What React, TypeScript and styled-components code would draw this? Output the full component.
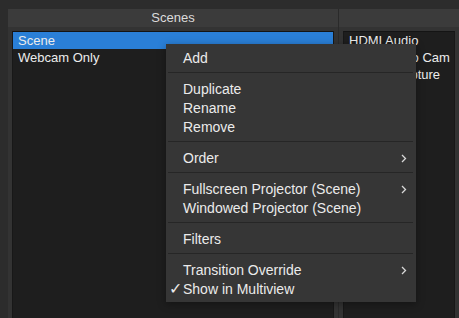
import React from "react";
import styled, { createGlobalStyle } from "styled-components";

const Global = createGlobalStyle`
  html, body { margin: 0; padding: 0; background: #2c2c2c; overflow: hidden; }
  body { font-family: "Liberation Sans", Arial, sans-serif; }
`;

const Page = styled.div`
  position: relative;
  height: 318px;
  width: 459px;
  padding: 9px 0 0 8px;
  box-sizing: border-box;
  display: flex;
  background: #2c2c2c;
`;

const Dock = styled.section<{ $w?: number }>`
  display: flex;
  flex-direction: column;
  ${(p) => (p.$w ? `width: ${p.$w}px; flex: none;` : `flex: 1;`)}
  background: #333333;
  min-width: 0;
`;

const DockHeader = styled.div`
  height: 18px;
  background: #3b3b3b;
  color: #dcdcdc;
  font-size: 13px;
  line-height: 18px;
  text-align: center;
  white-space: nowrap;
`;

const Divider = styled.div`
  width: 1px;
  flex: none;
  background: #2a2a2a;
`;

const DockBody = styled.div`
  flex: 1;
  padding: 4px 4px 0 4px;
  display: flex;
  min-height: 0;
`;

const List = styled.ul`
  flex: 1;
  margin: 0;
  padding: 0;
  list-style: none;
  background: #1e1e1e;
  border-top: 1px solid #141414;
  border-left: 1px solid #181818;
  border-right: 1px solid #181818;
  overflow: hidden;
`;

const Row = styled.li<{ $selected?: boolean }>`
  height: 17px;
  line-height: 17px;
  padding-left: 5px;
  font-size: 13px;
  color: #ececec;
  white-space: nowrap;
  background: ${(p) => (p.$selected ? "#2a7fd7" : "transparent")};
`;

const Menu = styled.div`
  position: absolute;
  left: 166px;
  top: 44px;
  width: 250px;
  padding: 4px 0;
  box-sizing: border-box;
  background: #363636;
  box-shadow: 0 2px 8px rgba(0, 0, 0, 0.35);
  font-size: 14px;
  color: #ebebeb;
`;

const Item = styled.div`
  display: grid;
  grid-template-columns: 17px 1fr 14px;
  align-items: center;
  height: 19px;
  line-height: 20px;
  padding-right: 7px;
  white-space: nowrap;
`;

const Check = styled.span`
  font-size: 16px;
  text-align: right;
  padding-right: 1px;
`;

const Sep = styled.div`
  height: 1px;
  margin: 5px 3px 6px 2px;
  background: #262626;
`;

const Chevron = () => (
  <svg width="6" height="9" viewBox="0 0 6 9" style={{ justifySelf: "end", marginRight: 2 }}>
    <path d="M1 1 L4.5 4.5 L1 8" fill="none" stroke="#d8d8d8" strokeWidth="1.3" />
  </svg>
);

type Entry = { label: string; sub?: boolean; checked?: boolean } | "sep";

const entries: Entry[] = [
  { label: "Add" },
  "sep",
  { label: "Duplicate" },
  { label: "Rename" },
  { label: "Remove" },
  "sep",
  { label: "Order", sub: true },
  "sep",
  { label: "Fullscreen Projector (Scene)", sub: true },
  { label: "Windowed Projector (Scene)" },
  "sep",
  { label: "Filters" },
  "sep",
  { label: "Transition Override", sub: true },
  { label: "Show in Multiview", checked: true },
];

export default function App() {
  return (
    <>
      <Global />
      <Page>
        <Dock $w={330}>
          <DockHeader>Scenes</DockHeader>
          <DockBody>
            <List>
              <Row $selected>Scene</Row>
              <Row>Webcam Only</Row>
            </List>
          </DockBody>
        </Dock>
        <Divider />
        <Dock>
          <DockHeader />
          <DockBody>
            <List>
              <Row>HDMI Audio</Row>
              <Row>HDMI Video Cam</Row>
              <Row>Screen Capture</Row>
            </List>
          </DockBody>
        </Dock>
        <Menu>
          {entries.map((e, i) =>
            e === "sep" ? (
              <Sep key={i} />
            ) : (
              <Item key={i}>
                <Check>{e.checked ? "✓" : ""}</Check>
                <span>{e.label}</span>
                {e.sub ? <Chevron /> : <span />}
              </Item>
            )
          )}
        </Menu>
      </Page>
    </>
  );
}
